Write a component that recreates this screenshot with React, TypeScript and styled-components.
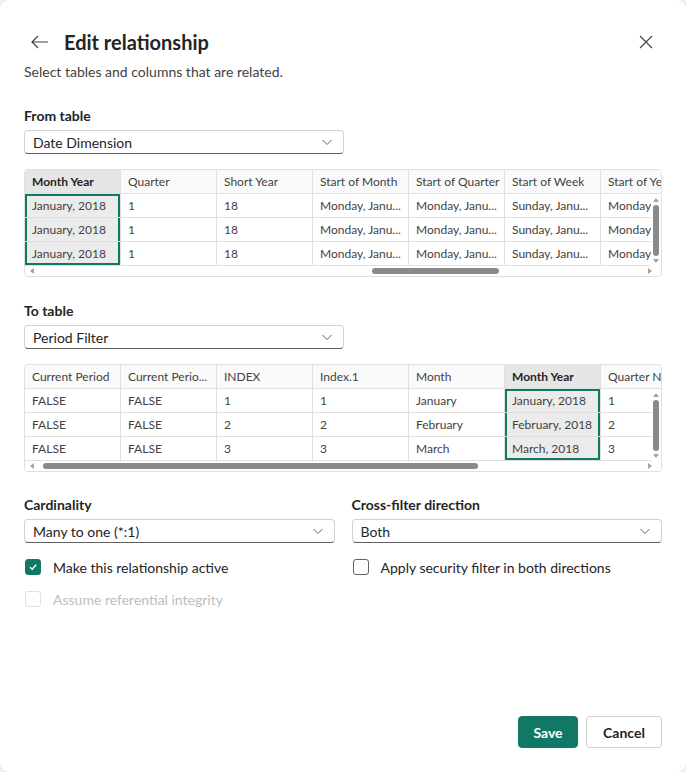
import React from 'react';
import styled, { createGlobalStyle } from 'styled-components';

const GlobalStyle = createGlobalStyle`
  html, body {
    margin: 0;
    padding: 0;
    background: #f7f7f7;
  }
  body {
    font-family: Lato, "Open Sans", sans-serif;
    color: #242424;
  }
  * {
    box-sizing: border-box;
  }
`;

const Dialog = styled.div`
  width: 686px;
  height: 772px;
  background: #ffffff;
  border-radius: 8px;
  box-shadow: 0 0 2px rgba(0, 0, 0, 0.25);
  padding: 26px 24px 24px;
  display: flex;
  flex-direction: column;
`;

const Header = styled.div`
  display: flex;
  align-items: center;
  height: 32px;
`;

const IconButton = styled.button`
  width: 32px;
  height: 32px;
  border: none;
  background: transparent;
  padding: 0;
  display: flex;
  align-items: center;
  justify-content: center;
  color: #424242;
  cursor: pointer;
`;

const Title = styled.h1`
  flex: 1;
  margin: 0 0 0 8px;
  font-size: 20px;
  line-height: 28px;
  font-weight: 700;
  color: #242424;
`;

const Subtitle = styled.p`
  margin: 4px 0 0;
  font-size: 14px;
  line-height: 20px;
  color: #424242;
`;

const Field = styled.div<{ $top: number }>`
  margin-top: ${(p) => p.$top}px;
  display: flex;
  flex-direction: column;
  gap: 4px;
`;

const Label = styled.div`
  font-size: 14px;
  line-height: 20px;
  font-weight: 700;
  color: #242424;
`;

const Select = styled.div<{ $width?: number }>`
  width: ${(p) => (p.$width ? `${p.$width}px` : '100%')};
  height: 24px;
  border: 1px solid #d1d1d1;
  border-bottom-color: #616161;
  border-radius: 4px;
  display: flex;
  align-items: center;
  justify-content: space-between;
  padding: 0 10px 0 8px;
  font-size: 14px;
  color: #242424;
`;

const TableFrame = styled.div`
  margin-top: 15px;
  width: 100%;
  border: 1px solid #e0e0e0;
  border-radius: 4px;
  overflow: hidden;
  font-size: 12px;
  color: #424242;
`;

const Row = styled.div`
  display: flex;
  height: 24px;
  white-space: nowrap;
`;

const HeadCell = styled.div<{ $selected?: boolean }>`
  flex: 0 0 96px;
  height: 24px;
  line-height: 23px;
  padding-left: 7px;
  border-right: 1px solid #e0e0e0;
  border-bottom: 1px solid #e0e0e0;
  background: ${(p) => (p.$selected ? '#e6e6e6' : '#fafafa')};
  font-weight: ${(p) => (p.$selected ? 700 : 400)};
  color: ${(p) => (p.$selected ? '#242424' : '#424242')};
  overflow: hidden;
`;

const BodyCell = styled.div<{ $selected?: boolean; $first?: boolean; $last?: boolean }>`
  flex: 0 0 96px;
  height: 24px;
  line-height: 23px;
  padding-left: 7px;
  border-right: 1px solid #e0e0e0;
  border-bottom: 1px solid #e0e0e0;
  background: ${(p) => (p.$selected ? '#ebebeb' : '#ffffff')};
  overflow: hidden;
  box-shadow: ${(p) =>
    p.$selected
      ? [
          'inset 2px 0 0 #117865',
          'inset -2px 0 0 #117865',
          p.$first ? 'inset 0 2px 0 #117865' : '',
          p.$last ? 'inset 0 -2px 0 #117865' : '',
        ]
          .filter(Boolean)
          .join(', ')
      : 'none'};
`;

const Body = styled.div`
  display: flex;
`;

const Rows = styled.div`
  flex: 1;
  overflow: hidden;
`;

const VScroll = styled.div`
  flex: 0 0 10px;
  display: flex;
  flex-direction: column;
  align-items: center;
  justify-content: space-between;
  padding: 3px 0 2px;
  background: #ffffff;
`;

const VThumb = styled.div`
  width: 6px;
  flex: 1;
  margin: 2px 0;
  border-radius: 3px;
  background: #8a8a8a;
`;

const HScroll = styled.div`
  height: 10px;
  display: flex;
  align-items: center;
  padding: 0 8px 0 4px;
  gap: 4px;
  background: #ffffff;
`;

const HTrack = styled.div`
  flex: 1;
  height: 6px;
  position: relative;
`;

const HThumb = styled.div`
  position: absolute;
  top: 0;
  height: 6px;
  border-radius: 3px;
  background: #8a8a8a;
`;

const OptionsGrid = styled.div`
  margin-top: 23px;
  display: grid;
  grid-template-columns: 1fr 1fr;
  column-gap: 17px;
`;

const Column = styled.div`
  display: flex;
  flex-direction: column;
`;

const CheckRow = styled.label<{ $disabled?: boolean; $top?: number }>`
  margin-top: ${(p) => p.$top ?? 0}px;
  height: 32px;
  display: flex;
  align-items: center;
  gap: 12px;
  padding-left: 1px;
  font-size: 14px;
  color: ${(p) => (p.$disabled ? '#bdbdbd' : '#242424')};
`;

const Box = styled.span<{ $checked?: boolean; $disabled?: boolean }>`
  width: 16px;
  height: 16px;
  border-radius: 3px;
  border: 1px solid
    ${(p) => (p.$checked ? '#117865' : p.$disabled ? '#e0e0e0' : '#616161')};
  background: ${(p) => (p.$checked ? '#117865' : '#ffffff')};
  display: flex;
  align-items: center;
  justify-content: center;
`;

const Footer = styled.div`
  margin-top: auto;
  display: flex;
  justify-content: flex-end;
  gap: 8px;
`;

const Button = styled.button<{ $primary?: boolean }>`
  height: 32px;
  min-width: ${(p) => (p.$primary ? 60 : 76)}px;
  padding: 0 12px;
  border-radius: 4px;
  border: 1px solid ${(p) => (p.$primary ? '#117865' : '#d1d1d1')};
  background: ${(p) => (p.$primary ? '#117865' : '#ffffff')};
  color: ${(p) => (p.$primary ? '#ffffff' : '#242424')};
  font-family: inherit;
  font-size: 14px;
  font-weight: 700;
  cursor: pointer;
`;

const Chevron = () => (
  <svg width="12" height="12" viewBox="0 0 12 12">
    <path d="M1.5 4 L6 8.5 L10.5 4" fill="none" stroke="#616161" strokeWidth="1" />
  </svg>
);

const Triangle = ({ dir }: { dir: 'up' | 'down' | 'left' | 'right' }) => {
  const pts = {
    up: '0,5 3,1 6,5',
    down: '0,1 3,5 6,1',
    left: '5,0 1,3 5,6',
    right: '1,0 5,3 1,6',
  }[dir];
  return (
    <svg width="6" height="6" viewBox="0 0 6 6">
      <polygon points={pts} fill="#a3a3a3" />
    </svg>
  );
};

type TableProps = {
  columns: string[];
  rows: string[][];
  selected: number;
  thumb: { left: number; width: number };
};

const DataTable = ({ columns, rows, selected, thumb }: TableProps) => (
  <TableFrame>
    <Row>
      {columns.map((c, i) => (
        <HeadCell key={c} $selected={i === selected}>
          {c}
        </HeadCell>
      ))}
    </Row>
    <Body>
      <Rows>
        {rows.map((r, ri) => (
          <Row key={ri}>
            {r.map((v, ci) => (
              <BodyCell
                key={ci}
                $selected={ci === selected}
                $first={ri === 0}
                $last={ri === rows.length - 1}
              >
                {v}
              </BodyCell>
            ))}
          </Row>
        ))}
      </Rows>
      <VScroll>
        <Triangle dir="up" />
        <VThumb />
        <Triangle dir="down" />
      </VScroll>
    </Body>
    <HScroll>
      <Triangle dir="left" />
      <HTrack>
        <HThumb style={{ left: thumb.left, width: thumb.width }} />
      </HTrack>
      <Triangle dir="right" />
    </HScroll>
  </TableFrame>
);

const fromColumns = [
  'Month Year',
  'Quarter',
  'Short Year',
  'Start of Month',
  'Start of Quarter',
  'Start of Week',
  'Start of Year',
];
const fromRows = [1, 2, 3].map(() => [
  'January, 2018',
  '1',
  '18',
  'Monday, Janu...',
  'Monday, Janu...',
  'Sunday, Janu...',
  'Monday, January 1, 2018',
]);

const toColumns = [
  'Current Period',
  'Current Perio...',
  'INDEX',
  'Index.1',
  'Month',
  'Month Year',
  'Quarter Number',
];
const toRows = [
  ['FALSE', 'FALSE', '1', '1', 'January', 'January, 2018', '1'],
  ['FALSE', 'FALSE', '2', '2', 'February', 'February, 2018', '2'],
  ['FALSE', 'FALSE', '3', '3', 'March', 'March, 2018', '3'],
];

export default function App() {
  return (
    <>
      <GlobalStyle />
      <Dialog>
        <Header>
          <IconButton aria-label="Back">
            <svg width="18" height="14" viewBox="0 0 18 14">
              <path d="M7 1 L1 7 L7 13 M1 7 H17" fill="none" stroke="#424242" strokeWidth="1.2" />
            </svg>
          </IconButton>
          <Title>Edit relationship</Title>
          <IconButton aria-label="Close">
            <svg width="14" height="14" viewBox="0 0 14 14">
              <path d="M1 1 L13 13 M13 1 L1 13" fill="none" stroke="#424242" strokeWidth="1.1" />
            </svg>
          </IconButton>
        </Header>
        <Subtitle>Select tables and columns that are related.</Subtitle>

        <Field $top={24}>
          <Label>From table</Label>
          <Select $width={320}>
            Date Dimension
            <Chevron />
          </Select>
        </Field>
        <DataTable
          columns={fromColumns}
          rows={fromRows}
          selected={0}
          thumb={{ left: 333, width: 127 }}
        />

        <Field $top={24}>
          <Label>To table</Label>
          <Select $width={320}>
            Period Filter
            <Chevron />
          </Select>
        </Field>
        <DataTable
          columns={toColumns}
          rows={toRows}
          selected={5}
          thumb={{ left: 4, width: 435 }}
        />

        <OptionsGrid>
          <Column>
            <Field $top={0}>
              <Label>Cardinality</Label>
              <Select>
                Many to one (*:1)
                <Chevron />
              </Select>
            </Field>
            <CheckRow $top={8}>
              <Box $checked>
                <svg width="10" height="10" viewBox="0 0 10 10">
                  <path d="M2 5.2 L4.2 7.3 L8.2 2.8" fill="none" stroke="#ffffff" strokeWidth="1.4" />
                </svg>
              </Box>
              Make this relationship active
            </CheckRow>
            <CheckRow $disabled>
              <Box $disabled />
              Assume referential integrity
            </CheckRow>
          </Column>
          <Column>
            <Field $top={0}>
              <Label>Cross-filter direction</Label>
              <Select>
                Both
                <Chevron />
              </Select>
            </Field>
            <CheckRow $top={8}>
              <Box />
              Apply security filter in both directions
            </CheckRow>
          </Column>
        </OptionsGrid>

        <Footer>
          <Button $primary>Save</Button>
          <Button>Cancel</Button>
        </Footer>
      </Dialog>
    </>
  );
}
